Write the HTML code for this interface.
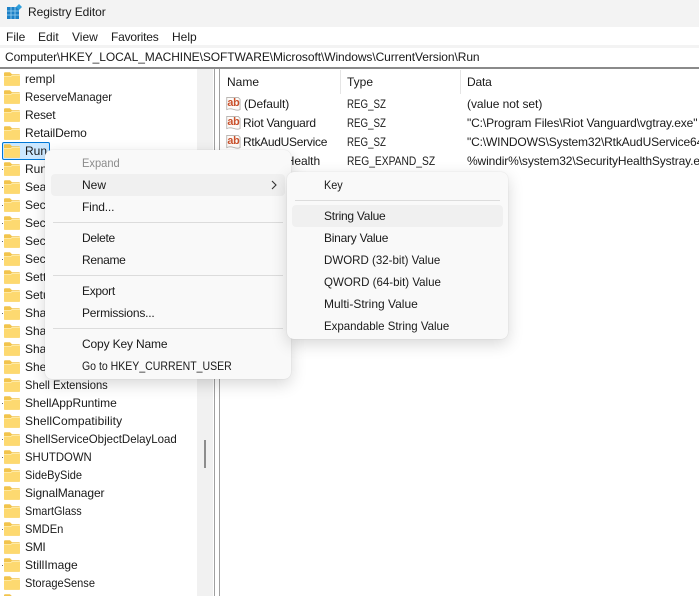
<!DOCTYPE html>
<html><head><meta charset="utf-8"><style>
html,body{margin:0;padding:0;width:699px;height:596px;overflow:hidden}
body{background:#fff}
#w{position:absolute;left:0;top:0;width:699px;height:596px;overflow:hidden;background:#fff;font-family:"Liberation Sans",sans-serif;font-size:12px;color:#1a1a1a;filter:blur(.25px)}
.t{position:absolute;white-space:nowrap;line-height:16px;height:16px;transform-origin:0 50%}
.b{position:absolute}
.d{position:absolute;left:2px;width:1px;height:1px;background:#666}
svg{position:absolute;overflow:visible}
.menu{position:absolute;background:#f9f9f9;border-radius:7px;box-shadow:0 5px 16px rgba(0,0,0,.16),0 0 1px rgba(0,0,0,.16)}
.sep{position:absolute;height:1px;background:#dcdcdc}
.hov{position:absolute;background:#f0f0f0;border-radius:4px}
</style></head><body><div id="w">
<svg width="0" height="0" style="position:absolute"><defs>
<symbol id="fo" viewBox="0 0 16 14"><path d="M0 1.2Q0 .3 1 .3H6L8 2.2H15Q16 2.2 16 3.2V13Q16 13.8 15 13.8H1Q0 13.8 0 13Z" fill="#f2c44c"/><path d="M0 4.2H6.5L8 3H15.2Q16 3 16 3.8V13Q16 13.8 15 13.8H1Q0 13.8 0 13Z" fill="#fdd970"/><path d="M0 4.6H6.7L8.1 3.4H16" fill="none" stroke="#fff0b8" stroke-width=".7"/></symbol>
<symbol id="ab" viewBox="0 0 16 16"><path d="M.8 1.5H13L15 3.5V14.5Q12 15.8 8 14.3Q4 13 .8 14.5Z" fill="#fdfbf9" stroke="#b3aeaa" stroke-width=".9"/><text x="1.4" y="10.8" font-family="Liberation Sans,sans-serif" font-size="11.5" font-weight="700" fill="#c9502a" letter-spacing="-.2">ab</text></symbol>
</defs></svg>

<!-- title bar -->
<div class="b" style="left:0;top:0;width:699px;height:27px;background:#f3f3f3"></div>
<svg style="left:7px;top:4px" width="15" height="15" viewBox="0 0 15 15"><rect x="0" y="3" width="12" height="12" fill="#1c80c6"/><path d="M4 3V15M8 3V15M0 7H12M0 11H12" stroke="#9ad2f2" stroke-width=".8"/><path d="M12 0L15 3L12 6L9 3Z" fill="#2f9fdc"/></svg>
<div class="t" style="left:28px;top:4px;letter-spacing:-.07px">Registry Editor</div>

<!-- menu bar -->
<div class="t" style="left:6px;top:29px">File</div>
<div class="t" style="left:38px;top:29px">Edit</div>
<div class="t" style="left:72px;top:29px">View</div>
<div class="t" style="left:111px;top:29px;letter-spacing:-.2px">Favorites</div>
<div class="t" style="left:172px;top:29px">Help</div>

<!-- address bar -->
<div class="b" style="left:0;top:45px;width:699px;height:3px;background:#f3f3f3"></div>
<div class="t" style="left:5px;top:49px;letter-spacing:-.08px">Computer\HKEY_LOCAL_MACHINE\SOFTWARE\Microsoft\Windows\CurrentVersion\Run</div>
<div class="b" style="left:0;top:67px;width:699px;height:2px;background:#8a8a8a"></div>

<!-- tree -->
<svg style="left:4px;top:72px" width="16" height="14"><use href="#fo"/></svg><div class="t" style="left:25px;top:71px">rempl</div>
<svg style="left:4px;top:90px" width="16" height="14"><use href="#fo"/></svg><div class="t" style="left:25px;top:89px;transform:scaleX(.946)">ReserveManager</div>
<svg style="left:4px;top:108px" width="16" height="14"><use href="#fo"/></svg><div class="t" style="left:25px;top:107px;letter-spacing:-.2px">Reset</div>
<svg style="left:4px;top:126px" width="16" height="14"><use href="#fo"/></svg><div class="t" style="left:25px;top:125px;letter-spacing:-.1px">RetailDemo</div>
<div class="b" style="left:2px;top:142px;width:46px;height:16px;background:#cce8ff;border:1px solid #0078d7;border-radius:2px"></div>
<svg style="left:4px;top:144px" width="16" height="14"><use href="#fo"/></svg><div class="t" style="left:25px;top:143px">Run</div>
<svg style="left:4px;top:162px" width="16" height="14"><use href="#fo"/></svg><div class="t" style="left:25px;top:161px">RunOnce</div>
<svg style="left:4px;top:180px" width="16" height="14"><use href="#fo"/></svg><div class="t" style="left:25px;top:179px">Search</div>
<svg style="left:4px;top:198px" width="16" height="14"><use href="#fo"/></svg><div class="t" style="left:25px;top:197px">Secure</div>
<svg style="left:4px;top:216px" width="16" height="14"><use href="#fo"/></svg><div class="t" style="left:25px;top:215px">Security</div>
<svg style="left:4px;top:234px" width="16" height="14"><use href="#fo"/></svg><div class="t" style="left:25px;top:233px">Secondary</div>
<svg style="left:4px;top:252px" width="16" height="14"><use href="#fo"/></svg><div class="t" style="left:25px;top:251px">SecEdit</div>
<svg style="left:4px;top:270px" width="16" height="14"><use href="#fo"/></svg><div class="t" style="left:25px;top:269px">Settings</div>
<svg style="left:4px;top:288px" width="16" height="14"><use href="#fo"/></svg><div class="t" style="left:25px;top:287px">Setup</div>
<svg style="left:4px;top:306px" width="16" height="14"><use href="#fo"/></svg><div class="t" style="left:25px;top:305px">Shared</div>
<svg style="left:4px;top:324px" width="16" height="14"><use href="#fo"/></svg><div class="t" style="left:25px;top:323px">Sharing</div>
<svg style="left:4px;top:342px" width="16" height="14"><use href="#fo"/></svg><div class="t" style="left:25px;top:341px">SharedDlls</div>
<svg style="left:4px;top:360px" width="16" height="14"><use href="#fo"/></svg><div class="t" style="left:25px;top:359px">Shell</div>
<svg style="left:4px;top:378px" width="16" height="14"><use href="#fo"/></svg><div class="t" style="left:25px;top:377px;transform:scaleX(.933)">Shell Extensions</div>
<svg style="left:4px;top:396px" width="16" height="14"><use href="#fo"/></svg><div class="t" style="left:25px;top:395px;letter-spacing:-.07px">ShellAppRuntime</div>
<svg style="left:4px;top:414px" width="16" height="14"><use href="#fo"/></svg><div class="t" style="left:25px;top:413px;letter-spacing:.1px">ShellCompatibility</div>
<svg style="left:4px;top:432px" width="16" height="14"><use href="#fo"/></svg><div class="t" style="left:25px;top:431px;transform:scaleX(.956)">ShellServiceObjectDelayLoad</div>
<svg style="left:4px;top:450px" width="16" height="14"><use href="#fo"/></svg><div class="t" style="left:25px;top:449px;transform:scaleX(.944)">SHUTDOWN</div>
<svg style="left:4px;top:468px" width="16" height="14"><use href="#fo"/></svg><div class="t" style="left:25px;top:467px;transform:scaleX(.92)">SideBySide</div>
<svg style="left:4px;top:486px" width="16" height="14"><use href="#fo"/></svg><div class="t" style="left:25px;top:485px;letter-spacing:-.1px">SignalManager</div>
<svg style="left:4px;top:504px" width="16" height="14"><use href="#fo"/></svg><div class="t" style="left:25px;top:503px;transform:scaleX(.905)">SmartGlass</div>
<svg style="left:4px;top:522px" width="16" height="14"><use href="#fo"/></svg><div class="t" style="left:25px;top:521px;transform:scaleX(.927)">SMDEn</div>
<svg style="left:4px;top:540px" width="16" height="14"><use href="#fo"/></svg><div class="t" style="left:25px;top:539px;letter-spacing:-.3px">SMI</div>
<svg style="left:4px;top:558px" width="16" height="14"><use href="#fo"/></svg><div class="t" style="left:25px;top:557px">StillImage</div>
<svg style="left:4px;top:576px" width="16" height="14"><use href="#fo"/></svg><div class="t" style="left:25px;top:575px;transform:scaleX(.92)">StorageSense</div>
<svg style="left:4px;top:594px" width="16" height="14"><use href="#fo"/></svg>
<div class="d" style="top:403px"></div><div class="d" style="top:439px"></div><div class="d" style="top:457px"></div><div class="d" style="top:529px"></div><div class="d" style="top:565px"></div><div class="d" style="top:169px"></div><div class="d" style="top:187px"></div><div class="d" style="top:205px"></div><div class="d" style="top:223px"></div><div class="d" style="top:241px"></div><div class="d" style="top:259px"></div><div class="d" style="top:313px"></div>

<!-- scrollbar + splitter -->
<div class="b" style="left:197px;top:69px;width:16px;height:527px;background:#f1f1f1"></div>
<div class="b" style="left:204px;top:440px;width:2px;height:28px;background:#8d8d8d"></div>
<div class="b" style="left:214px;top:69px;width:1px;height:527px;background:#a0a0a0"></div>
<div class="b" style="left:219px;top:69px;width:1px;height:527px;background:#a0a0a0"></div>

<!-- list -->
<div class="t" style="left:227px;top:74px">Name</div>
<div class="t" style="left:347px;top:74px">Type</div>
<div class="t" style="left:467px;top:74px;letter-spacing:-.2px">Data</div>
<div class="b" style="left:340px;top:70px;width:1px;height:24px;background:#e5e5e5"></div>
<div class="b" style="left:460px;top:70px;width:1px;height:24px;background:#e5e5e5"></div>

<svg style="left:226px;top:96px" width="15" height="15"><use href="#ab"/></svg>
<div class="t" style="left:244px;top:96px;letter-spacing:-.1px">(Default)</div><div class="t" style="left:347px;top:96px;transform:scaleX(.81)">REG_SZ</div><div class="t" style="left:467px;top:96px;letter-spacing:-.05px">(value not set)</div>
<svg style="left:226px;top:115px" width="15" height="15"><use href="#ab"/></svg>
<div class="t" style="left:243px;top:115px;letter-spacing:-.23px">Riot Vanguard</div><div class="t" style="left:347px;top:115px;transform:scaleX(.81)">REG_SZ</div><div class="t" style="left:467px;top:115px;letter-spacing:-.12px">"C:\Program Files\Riot Vanguard\vgtray.exe"</div>
<svg style="left:226px;top:134px" width="15" height="15"><use href="#ab"/></svg>
<div class="t" style="left:243px;top:134px;letter-spacing:-.28px">RtkAudUService</div><div class="t" style="left:347px;top:134px;transform:scaleX(.81)">REG_SZ</div><div class="t" style="left:467px;top:134px;letter-spacing:-.15px">"C:\WINDOWS\System32\RtkAudUService64.exe"</div>
<div class="t" style="left:243px;top:153px;letter-spacing:-.07px">SecurityHealth</div><div class="t" style="left:347px;top:153px;transform:scaleX(.854)">REG_EXPAND_SZ</div><div class="t" style="left:467px;top:153px;letter-spacing:-.12px">%windir%\system32\SecurityHealthSystray.exe</div>

<!-- context menu -->
<div class="menu" style="left:45px;top:150px;width:246px;height:229px"></div>
<div class="hov" style="left:51px;top:174px;width:234px;height:22px"></div>
<div class="t" style="left:82px;top:155px;color:#8c8c8c;transform:scaleX(.927)">Expand</div>
<div class="t" style="left:82px;top:177px">New</div>
<svg style="left:270px;top:180px" width="8" height="10"><path d="M2 1L6 5L2 9" fill="none" stroke="#333" stroke-width="1.1"/></svg>
<div class="t" style="left:82px;top:199px;letter-spacing:-.15px">Find...</div>
<div class="sep" style="left:53px;top:222px;width:230px"></div>
<div class="t" style="left:82px;top:230px;letter-spacing:-.3px">Delete</div>
<div class="t" style="left:82px;top:252px;letter-spacing:-.3px">Rename</div>
<div class="sep" style="left:53px;top:275px;width:230px"></div>
<div class="t" style="left:82px;top:283px;letter-spacing:-.3px">Export</div>
<div class="t" style="left:82px;top:305px;letter-spacing:-.2px">Permissions...</div>
<div class="sep" style="left:53px;top:328px;width:230px"></div>
<div class="t" style="left:82px;top:336px;letter-spacing:-.15px">Copy Key Name</div>
<div class="t" style="left:82px;top:358px;transform:scaleX(.877)">Go to HKEY_CURRENT_USER</div>

<!-- submenu -->
<div class="menu" style="left:287px;top:172px;width:221px;height:167px"></div>
<div class="t" style="left:324px;top:177px;transform:scaleX(.905)">Key</div>
<div class="sep" style="left:295px;top:200px;width:205px"></div>
<div class="hov" style="left:292px;top:205px;width:211px;height:22px"></div>
<div class="t" style="left:324px;top:208px;letter-spacing:-.25px">String Value</div>
<div class="t" style="left:324px;top:230px;letter-spacing:-.25px">Binary Value</div>
<div class="t" style="left:324px;top:252px;transform:scaleX(.96)">DWORD (32-bit) Value</div>
<div class="t" style="left:324px;top:274px;transform:scaleX(.96)">QWORD (64-bit) Value</div>
<div class="t" style="left:324px;top:296px">Multi-String Value</div>
<div class="t" style="left:324px;top:318px;transform:scaleX(.955)">Expandable String Value</div>
</div></body></html>
